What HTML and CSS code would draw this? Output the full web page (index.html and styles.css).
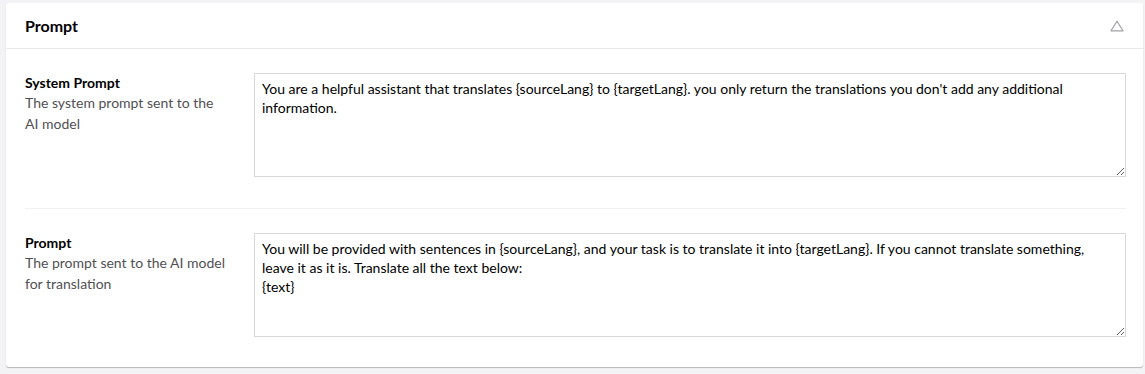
FILE: index.html
```html
<!DOCTYPE html>
<html>
<head>
<meta charset="utf-8">
<link rel="stylesheet" href="styles.css">
</head>
<body>
<div class="box">
  <div class="box-header">
    <h2 class="box-title">Prompt</h2>
    <svg class="toggle" width="14" height="12" viewBox="0 0 14 12"><path d="M7 1.2 L13 10.8 H1 Z" fill="none" stroke="#a2a1a6" stroke-width="1.2" stroke-linejoin="round"/></svg>
  </div>
  <div class="box-content">
    <div class="property">
      <div class="label-col">
        <div class="label">System Prompt</div>
        <div class="desc">The system prompt sent to the AI model</div>
      </div>
      <textarea class="field" rows="5">You are a helpful assistant that translates {sourceLang} to {targetLang}. you only return the translations you don't add any additional information.</textarea>
    </div>
    <div class="property">
      <div class="label-col">
        <div class="label">Prompt</div>
        <div class="desc">The prompt sent to the AI model for translation</div>
      </div>
      <textarea class="field" rows="5">You will be provided with sentences in {sourceLang}, and your task is to translate it into {targetLang}. If you cannot translate something, leave it as it is. Translate all the text below:
{text}</textarea>
    </div>
  </div>
</div>
</body>
</html>
```

FILE: styles.css
```css
html, body {
  margin: 0;
  padding: 0;
  background: #f3f3f5;
  font-family: Lato, "Open Sans", sans-serif;
}
body {
  padding: 3px 2px 7px 6px;
}
.box {
  background: #fff;
  border-radius: 3px;
  box-shadow: 0 1px 1px rgba(0, 0, 0, 0.25);
}
.box-header {
  height: 45px;
  border-bottom: 1px solid #e9e9eb;
  display: flex;
  align-items: center;
  justify-content: space-between;
  padding: 0 19px 0 19px;
}
.box-title {
  margin: 0;
  font-size: 16px;
  font-weight: 700;
  color: #000;
}
.toggle {
  display: block;
  margin-top: 1px;
}
.box-content {
  padding: 24px 17px 0 19px;
}
.property {
  display: flex;
  gap: 29px;
  padding-bottom: 31px;
}
.property + .property {
  border-top: 1px solid #f0f0f2;
  padding-top: 24px;
  padding-bottom: 30px;
}
.label-col {
  width: 200px;
  flex: none;
}
.label {
  font-size: 14px;
  font-weight: 700;
  line-height: 19px;
  color: #000;
}
.desc {
  font-size: 14px;
  line-height: 21px;
  color: #515054;
}
.field {
  flex: 1;
  margin: 0;
  box-sizing: border-box;
  height: 104px;
  border: 1px solid #d8d7d9;
  border-radius: 0;
  padding: 5px 18px 4px 7px;
  font-family: Lato, "Open Sans", sans-serif;
  font-size: 14px;
  line-height: 19px;
  color: #000;
  resize: vertical;
}
```
